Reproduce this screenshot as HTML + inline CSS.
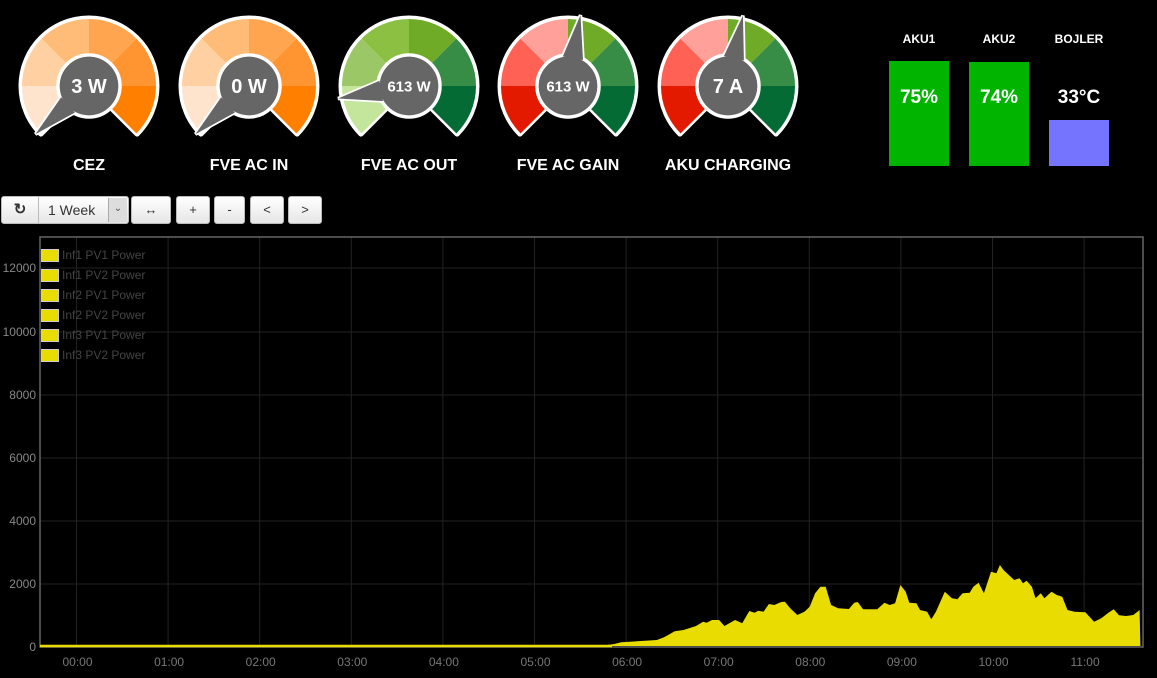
<!DOCTYPE html>
<html><head><meta charset="utf-8">
<style>
html,body{margin:0;padding:0;background:#000;width:1157px;height:678px;overflow:hidden;font-family:"Liberation Sans",Arial,sans-serif;}
.btn{position:absolute;top:196px;height:28px;background:linear-gradient(#fff,#e6e6e6);border:1px solid #bbb;border-radius:3px;box-sizing:border-box;font-size:13px;color:#333;text-align:center;line-height:26px;}
.lbl{position:absolute;color:#fff;font-weight:bold;text-align:center;}
.leg{position:absolute;left:41px;width:16px;height:11px;background:#e8dc00;border:1px solid #ccc;}
.legt{position:absolute;left:62px;font-size:12px;color:#444;}
.yl{position:absolute;right:1121px;font-size:12px;color:#888;text-align:right;}
.xl{position:absolute;top:655px;font-size:12px;color:#777;width:50px;margin-left:-25px;text-align:center;}
</style></head><body>
<svg id="g" width="1157" height="678" style="position:absolute;left:0;top:0"></svg>

<div class="lbl" style="left:39px;top:157px;width:100px;font-size:16px">CEZ</div>
<div class="lbl" style="left:189px;top:157px;width:120px;font-size:16px">FVE AC IN</div>
<div class="lbl" style="left:339px;top:157px;width:140px;font-size:16px">FVE AC OUT</div>
<div class="lbl" style="left:498px;top:157px;width:140px;font-size:16px">FVE AC GAIN</div>
<div class="lbl" style="left:648px;top:157px;width:160px;font-size:16px">AKU CHARGING</div>

<div class="lbl" style="left:879px;top:32px;width:80px;font-size:12px">AKU1</div>
<div class="lbl" style="left:959px;top:32px;width:80px;font-size:12px">AKU2</div>
<div class="lbl" style="left:1039px;top:32px;width:80px;font-size:12px">BOJLER</div>
<div style="position:absolute;left:889px;top:61px;width:60px;height:105px;background:#00b400"></div>
<div style="position:absolute;left:969px;top:62px;width:60px;height:104px;background:#00b400"></div>
<div style="position:absolute;left:1049px;top:120px;width:60px;height:46px;background:#7474ff"></div>
<div class="lbl" style="left:879px;top:87px;width:80px;font-size:19px">75%</div>
<div class="lbl" style="left:959px;top:87px;width:80px;font-size:19px">74%</div>
<div class="lbl" style="left:1039px;top:87px;width:80px;font-size:19px">33°C</div>

<div class="btn" style="left:1px;width:38px;border-radius:3px 0 0 3px;font-size:15px;font-weight:bold">&#x21bb;</div>
<div class="btn" style="left:38px;width:91px;border-radius:0 3px 3px 0;text-align:left;padding-left:9px;font-size:14px">1 Week<span style="position:absolute;right:1px;top:1px;width:18px;height:24px;background:#ddd;border-left:1px solid #aaa;font-size:10px;line-height:22px;text-align:center;color:#555">&#8964;</span></div>
<div class="btn" style="left:131px;width:40px">&#x2194;</div>
<div class="btn" style="left:176px;width:34px">+</div>
<div class="btn" style="left:214px;width:31px">-</div>
<div class="btn" style="left:250px;width:34px">&lt;</div>
<div class="btn" style="left:288px;width:34px">&gt;</div>

<div class="leg" style="top:249px"></div><div class="legt" style="top:248px">Inf1 PV1 Power</div>
<div class="leg" style="top:269px"></div><div class="legt" style="top:268px">Inf1 PV2 Power</div>
<div class="leg" style="top:289px"></div><div class="legt" style="top:288px">Inf2 PV1 Power</div>
<div class="leg" style="top:309px"></div><div class="legt" style="top:308px">Inf2 PV2 Power</div>
<div class="leg" style="top:329px"></div><div class="legt" style="top:328px">Inf3 PV1 Power</div>
<div class="leg" style="top:349px"></div><div class="legt" style="top:348px">Inf3 PV2 Power</div>

<div class="yl" style="top:261px">12000</div>
<div class="yl" style="top:325px">10000</div>
<div class="yl" style="top:388px">8000</div>
<div class="yl" style="top:451px">6000</div>
<div class="yl" style="top:514px">4000</div>
<div class="yl" style="top:577px">2000</div>
<div class="yl" style="top:640px">0</div>

<div id="xls"></div>

<script>
var NS="http://www.w3.org/2000/svg",svg=document.getElementById('g');
function el(t,a){var e=document.createElementNS(NS,t);for(var k in a)e.setAttribute(k,a[k]);svg.appendChild(e);return e;}
function P(cx,cy,r,d){var a=d*Math.PI/180;return [cx+r*Math.cos(a),cy-r*Math.sin(a)];}
function seg(cx,cy,r0,r1,a0,a1){var p1=P(cx,cy,r1,a0),p2=P(cx,cy,r1,a1),p3=P(cx,cy,r0,a1),p4=P(cx,cy,r0,a0);var lg=(a0-a1)>180?1:0;
return "M"+p4+" L"+p1+" A"+r1+","+r1+" 0 "+lg+" 1 "+p2+" L"+p3+(r0>0?" A"+r0+","+r0+" 0 "+lg+" 0 "+p4:"")+"Z";}
var ys=[268,332,395,458,521,584];
ys.forEach(function(y){el('line',{x1:40,x2:1143,y1:y,y2:y,stroke:'#222','stroke-width':1});});
var xs=document.getElementById('xls'),h='';
for(var i=0;i<12;i++){var x=76.5+i*91.6;el('line',{x1:x,x2:x,y1:237,y2:646,stroke:'#222','stroke-width':1});
h+='<div class="xl" style="left:'+(x+1)+'px">'+(i<10?'0':'')+i+':00</div>';}
xs.innerHTML=h;
el('rect',{x:40,y:237,width:1103,height:410,fill:'none',stroke:'#666','stroke-width':1.5});
el('line',{x1:40,x2:612,y1:646,y2:646,stroke:'#e8dc00','stroke-width':2.5});
var pts=[[0,288],[40,282],[60,277],[160,270],[180,262],[210,244],[235,240],[270,228],[290,215],[300,218],[315,210],[335,210],[350,228],[380,210],[400,220],[420,183],[435,188],[445,182],[460,185],[475,162],[490,165],[510,156],[520,155],[535,175],[555,195],[575,185],[590,170],[605,130],[620,110],[635,110],[650,165],[670,175],[700,177],[715,158],[725,156],[740,178],[780,178],[800,158],[815,165],[830,160],[845,105],[860,125],[870,158],[890,160],[900,180],[920,185],[932,208],[945,185],[970,125],[990,145],[1005,148],[1020,130],[1040,128],[1050,110],[1065,98],[1080,130],[1100,65],[1115,70],[1125,45],[1135,60],[1150,75],[1165,90],[1180,85],[1190,100],[1200,92],[1215,110],[1225,145],[1240,130],[1250,145],[1270,125],[1285,135],[1300,140],[1315,180],[1335,185],[1365,187],[1390,215],[1410,205],[1430,188],[1445,178],[1460,196],[1480,198],[1500,195],[1518,180],[1520,288]];
el('polygon',{points:pts.map(function(p){return (600+p[0]*0.3555).toFixed(1)+','+(550+p[1]/3).toFixed(1);}).join(' '),fill:'#e8dc00'});
var G=[
 {cx:89,cols:['#ffe4cd','#ffd0a2','#ffbb78','#ffa54f','#ff9530','#ff8000'],n:222,t:'3 W',fs:20},
 {cx:249,cols:['#ffe4cd','#ffd0a2','#ffbb78','#ffa54f','#ff9530','#ff8000'],n:222,t:'0 W',fs:20},
 {cx:409,cols:['#c3e59c','#9cc766','#8bc043','#6fab27','#378c46','#056b35'],n:190,t:'613 W',fs:15},
 {cx:568,cols:['#e31a00','#ff6155','#ffa09a','#6fab27','#378c46','#046b35'],n:80,t:'613 W',fs:15},
 {cx:728,cols:['#e31a00','#ff6155','#ffa09a','#6fab27','#378c46','#046b35'],n:78,t:'7 A',fs:20}];
G.forEach(function(g){var cx=g.cx,cy=86;
 el('path',{d:seg(cx,cy,0,68,225,-45),fill:'#fff',stroke:'#fff','stroke-width':5,'stroke-linejoin':'round'});
 for(var i=0;i<6;i++)el('path',{d:seg(cx,cy,0,67,225-45*i,180-45*i),fill:g.cols[i]});
 var tip=P(cx,cy,72,g.n),b1=P(cx,cy,30,g.n+20),b2=P(cx,cy,30,g.n-20);
 var nd="M"+b1+" L"+tip+" L"+b2+"Z";
 el('path',{d:nd,fill:'#666',stroke:'#fff','stroke-width':3.5,'stroke-linejoin':'miter'});
 el('circle',{cx:cx,cy:cy,r:31,fill:'#666',stroke:'#fff','stroke-width':3.5});
 el('path',{d:nd,fill:'#666'});
 el('circle',{cx:cx,cy:cy,r:29.2,fill:'#666'});
 var t=el('text',{x:cx,y:cy+g.fs*0.36,'text-anchor':'middle',fill:'#fff','font-weight':'bold','font-size':g.fs,'font-family':'Liberation Sans, Arial, sans-serif'});t.textContent=g.t;
});
</script>
</body></html>
